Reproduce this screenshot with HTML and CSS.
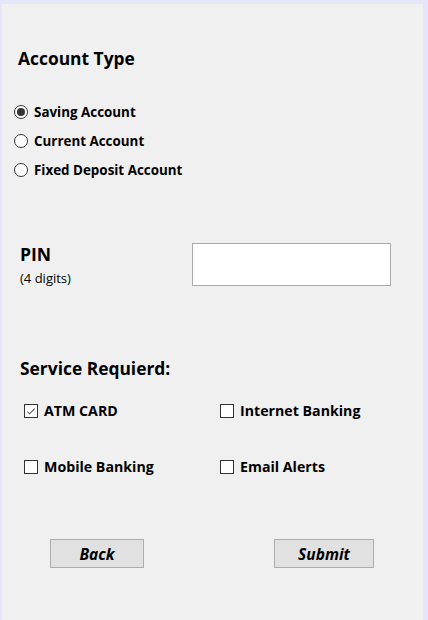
FILE: index.html
```html
<!DOCTYPE html>
<html>
<head>
<meta charset="utf-8">
<link rel="stylesheet" href="styles.css">
</head>
<body>
<div class="panel">
  <h2 class="heading acct">Account Type</h2>
  <div class="radios">
    <label class="radio-row"><span class="radio checked"></span><span class="opt">Saving Account</span></label>
    <label class="radio-row"><span class="radio"></span><span class="opt">Current Account</span></label>
    <label class="radio-row"><span class="radio"></span><span class="opt">Fixed Deposit Account</span></label>
  </div>

  <div class="pin-row">
    <div class="pin-label">
      <div class="heading pin">PIN</div>
      <div class="hint">(4 digits)</div>
    </div>
    <div class="pin-input"></div>
  </div>

  <h2 class="heading service">Service Requierd:</h2>
  <div class="checks">
    <label class="check-row"><span class="box checked"><svg viewBox="0 0 13 13" width="13" height="13"><path d="M2.5 6.5 L5 9 L10.5 3.5" fill="none" stroke="#555" stroke-width="1.1"/></svg></span><span class="opt big">ATM CARD</span></label>
    <label class="check-row"><span class="box"></span><span class="opt big">Internet Banking</span></label>
    <label class="check-row"><span class="box"></span><span class="opt big">Mobile Banking</span></label>
    <label class="check-row"><span class="box"></span><span class="opt big">Email Alerts</span></label>
  </div>

  <div class="buttons">
    <button class="btn back">Back</button>
    <button class="btn submit">Submit</button>
  </div>
</div>
</body>
</html>
```
FILE: styles.css
```css
html, body {
  margin: 0;
  padding: 0;
  background: #e6e6fa;
  height: 620px;
  overflow: hidden;
}
body {
  font-family: "Open Sans", "Noto Sans", sans-serif;
  color: #000;
}
.panel {
  margin: 4px 5px 0 2px;
  height: 616px;
  background: #f0f0f0;
  box-sizing: border-box;
  padding-top: 44px;
}
.heading {
  margin: 0;
  font-weight: 700;
  font-size: 17.4px;
  line-height: 20px;
}
.acct {
  padding-left: 16px;
}
.radios {
  margin-top: 29px;
  padding-left: 12px;
  display: flex;
  flex-direction: column;
}
.radio-row {
  display: flex;
  align-items: center;
  height: 29px;
  gap: 6px;
}
.radio {
  width: 14px;
  height: 14px;
  box-sizing: border-box;
  border: 1px solid #333;
  border-radius: 50%;
  background: #fff;
  display: flex;
  align-items: center;
  justify-content: center;
}
.radio.checked::after {
  content: "";
  width: 8px;
  height: 8px;
  border-radius: 50%;
  background: #333;
}
.opt {
  font-weight: 700;
  font-size: 13.4px;
  line-height: 16px;
}
.opt.big {
  font-size: 14.2px;
}
.pin-row {
  display: flex;
  margin-top: 59px;
  padding-left: 18px;
}
.pin-label {
  width: 172px;
}
.pin {
  font-size: 17.6px;
  line-height: 22px;
  margin-top: 0;
}
.hint {
  margin-top: 5px;
  font-size: 13px;
  line-height: 16px;
}
.pin-input {
  width: 199px;
  height: 43px;
  box-sizing: border-box;
  border: 1px solid #aaa;
  background: #fff;
}
.service {
  margin-top: 72px;
  padding-left: 18px;
}
.checks {
  margin-top: 25px;
  padding-left: 22px;
  display: grid;
  grid-template-columns: 196px 180px;
  grid-auto-rows: 56px;
}
.check-row {
  display: flex;
  align-items: flex-start;
  gap: 6px;
}
.box {
  width: 14px;
  height: 14px;
  box-sizing: border-box;
  border: 1px solid #333;
  background: #fff;
  display: flex;
  align-items: center;
  justify-content: center;
  margin-top: 1px;
}
.box svg {
  display: block;
}
.buttons {
  margin-top: 24px;
  display: flex;
  padding-left: 48px;
  gap: 130px;
}
.btn {
  height: 29px;
  box-sizing: border-box;
  background: #e1e1e1;
  border: 1px solid #adadad;
  font-family: "Open Sans", "Noto Sans", sans-serif;
  font-weight: 700;
  font-style: italic;
  font-size: 15.5px;
  color: #000;
  padding: 0;
}
.back { width: 94px; }
.submit { width: 100px; }
```
